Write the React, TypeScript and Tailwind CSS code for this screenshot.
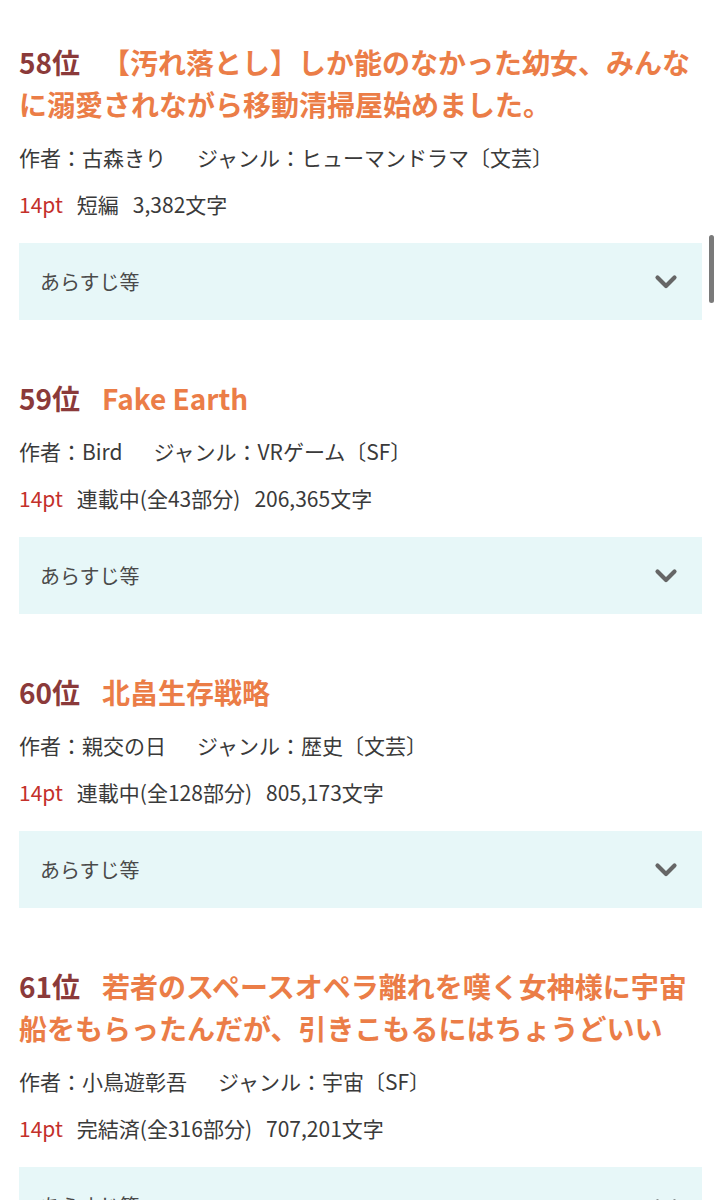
import React from "react";

type Item = {
  rank: string;
  title: string;
  author: string;
  genre: string;
  status: string;
  chars: string;
};

const items: Item[] = [
  {
    rank: "58位",
    title: "【汚れ落とし】しか能のなかった幼女、みんなに溺愛されながら移動清掃屋始めました。",
    author: "古森きり",
    genre: "ヒューマンドラマ〔文芸〕",
    status: "短編",
    chars: "3,382文字",
  },
  {
    rank: "59位",
    title: "Fake Earth",
    author: "Bird",
    genre: "VRゲーム〔SF〕",
    status: "連載中(全43部分)",
    chars: "206,365文字",
  },
  {
    rank: "60位",
    title: "北畠生存戦略",
    author: "親交の日",
    genre: "歴史〔文芸〕",
    status: "連載中(全128部分)",
    chars: "805,173文字",
  },
  {
    rank: "61位",
    title: "若者のスペースオペラ離れを嘆く女神様に宇宙船をもらったんだが、引きこもるにはちょうどいい",
    author: "小鳥遊彰吾",
    genre: "宇宙〔SF〕",
    status: "完結済(全316部分)",
    chars: "707,201文字",
  },
];

const font = {
  fontFamily:
    '"Noto Sans CJK JP", "Noto Sans", "Liberation Sans", sans-serif',
};

function Chevron() {
  return (
    <svg width="24" height="16" viewBox="0 0 24 16" fill="none">
      <path
        d="M3.5 3.5 L12 12 L20.5 3.5"
        stroke="#666666"
        strokeWidth="4.2"
        strokeLinecap="round"
        strokeLinejoin="round"
      />
    </svg>
  );
}

function Entry({ item }: { item: Item }) {
  return (
    <div className="mb-[57px]">
      <h2 className="text-[28px] leading-[42px] font-bold">
        <span className="text-[#8b3a3a] mr-[22px]">{item.rank}</span>
        <span className="text-[#eb7d47]">{item.title}</span>
      </h2>
      <div className="mt-[17px] text-[21px] leading-[30px] text-[#3a3a3a]">
        <span>作者：{item.author}</span>
        <span className="ml-[31px]">ジャンル：{item.genre}</span>
      </div>
      <div className="mt-[17px] text-[21px] leading-[30px] text-[#3a3a3a]">
        <span className="text-[#c4302b]">14pt</span>
        <span className="ml-[14px]">{item.status}</span>
        <span className="ml-[14px]">{item.chars}</span>
      </div>
      <div className="mt-[24px] h-[77px] bg-[#e7f7f8] flex items-center justify-between pl-[21px] pr-[24px]">
        <span className="text-[20px] text-[#4a4a4a]">あらすじ等</span>
        <Chevron />
      </div>
    </div>
  );
}

export default function App() {
  return (
    <div
      className="relative w-[721px] h-[1200px] overflow-hidden bg-white"
      style={font}
    >
      <div className="pt-[41px] pl-[19px] pr-[19px]">
        {items.map((it) => (
          <Entry key={it.rank} item={it} />
        ))}
      </div>
      <div className="absolute left-[709px] top-[235px] w-[5px] h-[68px] rounded-full bg-[#7a7a7a]" />
    </div>
  );
}
